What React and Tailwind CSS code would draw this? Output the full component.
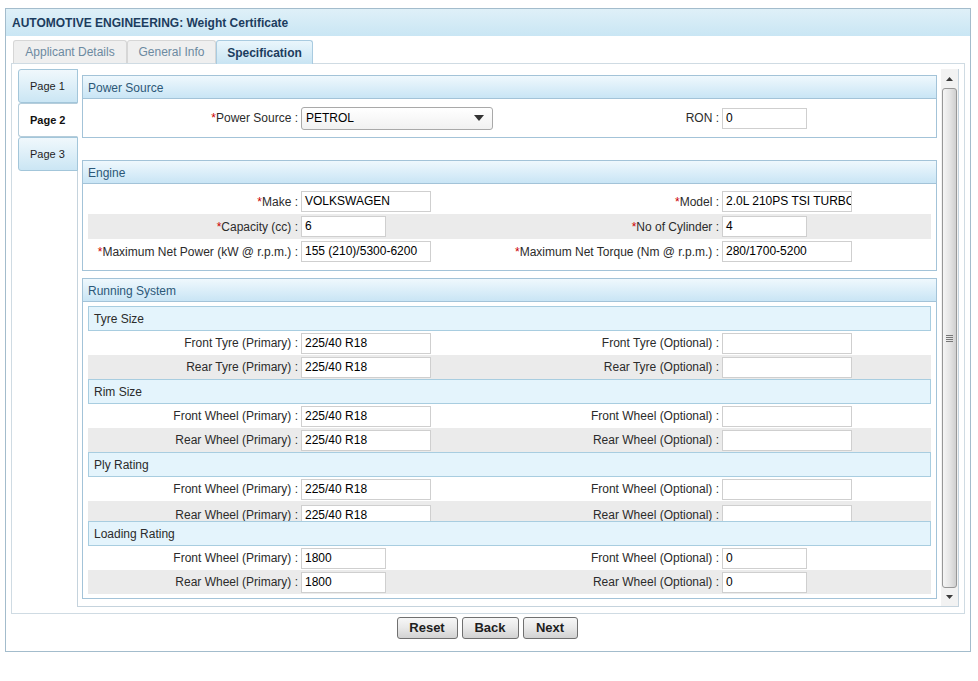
import React from "react";

const Req = () => <span className="text-[#cc0000]">*</span>;

function Field({ value = "", w = 130 }) {
  return (
    <div
      className={`${w === 130 ? "w-[130px]" : "w-[85px]"} ml-[2px] h-[21px] shrink-0 overflow-hidden whitespace-nowrap border border-[#cfcfcf] bg-white px-[3px] text-[12px] leading-[19px] text-black`}
    >
      {value}
    </div>
  );
}

function Half({ label, req, value, w }) {
  return (
    <div className="flex w-[421px] shrink-0 items-center">
      <div className="w-[211px] shrink-0 whitespace-nowrap pr-[1px] text-right">
        {req && <Req />}
        {label} :
      </div>
      <Field value={value} w={w} />
    </div>
  );
}

function Row({ gray, a, b, h = "h-[24px]" }) {
  return (
    <div className={`flex items-center ${h} ${gray ? "bg-[#ebebeb]" : "bg-white"}`}>
      <Half {...a} />
      <Half {...b} />
    </div>
  );
}

function ClippedRow({ gray, a, b }) {
  return (
    <div className={`h-[20px] overflow-hidden ${gray ? "bg-[#ebebeb]" : "bg-white"}`}>
      <div className="pt-[2px]">
        <Row gray={gray} a={a} b={b} />
      </div>
    </div>
  );
}

function SectionHeader({ children }) {
  return (
    <div className="flex h-[23px] items-center border-b border-[#a3c3d8] bg-gradient-to-b from-[#eff8fd] to-[#c9e5f5] px-[5px] pt-[1px] text-[12px] text-[#2c5878]">
      {children}
    </div>
  );
}

function SubHeader({ children }) {
  return (
    <div className="flex h-[25px] items-center border border-[#a8cde0] bg-[#e4f4fc] px-[5px] text-[12px] text-[#2b2b2b]">
      {children}
    </div>
  );
}

function Tri({ down }) {
  return (
    <svg width="7" height="4" viewBox="0 0 7 4">
      <path d={down ? "M0 0 L7 0 L3.5 4 Z" : "M0 4 L3.5 0 L7 4 Z"} fill="#3a3a3a" />
    </svg>
  );
}

function PageTab({ label, active }) {
  return (
    <div
      className={`flex h-[34px] items-center rounded-l-[3px] border pl-[11px] text-[11px] ${
        active
          ? "border-[#b5cddb] border-r-white bg-white font-bold text-[#111]"
          : "border-[#a3c6da] bg-gradient-to-b from-[#f0f8fc] to-[#cbe6f4] text-[#1e1e1e]"
      }`}
    >
      {label}
    </div>
  );
}

const t225 = "225/40 R18";

export default function App() {
  return (
    <div className="min-h-[681px] bg-white pl-[5px] pt-[8px] font-['Liberation_Sans',Arial,sans-serif] text-[12px] text-[#2b2b2b]">
      <div className="flex h-[644px] w-[966px] flex-col border border-[#a3bccc]">
        <div className="flex h-[27px] shrink-0 items-center bg-gradient-to-b from-[#dff0f8] to-[#c9e6f4] px-[6px] font-bold text-[#1c3c5e]">
          AUTOMOTIVE ENGINEERING: Weight Certificate
        </div>
        <div className="px-[5px] pt-[4px]">
          <div className="flex h-[23px] pl-[2px]">
            <div className="flex w-[114px] items-center justify-center rounded-t-[3px] border border-b-0 border-[#d6d6d6] bg-[#efefef] text-[#6c8aa1]">
              Applicant Details
            </div>
            <div className="flex w-[89px] items-center justify-center rounded-t-[3px] border border-b-0 border-[#d6d6d6] bg-[#efefef] text-[#6c8aa1]">
              General Info
            </div>
            <div className="relative z-10 flex h-[24px] w-[97px] items-center justify-center rounded-t-[3px] border border-b-0 border-[#a9cbe0] bg-gradient-to-b from-[#eaf6fc] to-[#c8e4f3] font-bold text-[#1c3c5e]">
              Specification
            </div>
          </div>
          <div className="flex h-[551px] border border-[#cfdbe3] pb-[6px] pl-[6px] pr-[4px] pt-[5px]">
            <div className="relative z-10 flex w-[60px] shrink-0 flex-col">
              <PageTab label="Page 1" />
              <PageTab label="Page 2" active />
              <PageTab label="Page 3" />
            </div>
            <div className="-ml-[1px] flex w-[882px] shrink-0 border-b border-l border-r border-[#c5d3dd]">
              <div className="flex w-[859px] shrink-0 flex-col overflow-hidden pl-[4px] pt-[6px]">
                {/* Power Source */}
                <div className="w-[855px] shrink-0 border border-[#a3c3d8]">
                  <SectionHeader>Power Source</SectionHeader>
                  <div className="px-[5px] py-[7px]">
                    <div className="flex h-[24px] items-center">
                      <div className="flex w-[421px] shrink-0 items-center">
                        <div className="w-[211px] shrink-0 whitespace-nowrap pr-[1px] text-right">
                          <Req />
                          Power Source :
                        </div>
                        <div className="ml-[2px] flex h-[23px] w-[192px] items-center justify-between rounded-[3px] border border-[#a9a9a9] bg-gradient-to-b from-white to-[#f1f1f1] pl-[4px] pr-[8px] text-black">
                          <span>PETROL</span>
                          <svg width="10" height="6" viewBox="0 0 10 6">
                            <path d="M0 0 L10 0 L5 6 Z" fill="#333" />
                          </svg>
                        </div>
                      </div>
                      <Half label="RON" value="0" w={85} />
                    </div>
                  </div>
                </div>

                {/* Engine */}
                <div className="mt-[22px] w-[855px] shrink-0 border border-[#a3c3d8]">
                  <SectionHeader>Engine</SectionHeader>
                  <div className="px-[5px] pb-[6px] pt-[5px]">
                    <Row
                      h="h-[25px]"
                      a={{ label: "Make", req: true, value: "VOLKSWAGEN", w: 130 }}
                      b={{ label: "Model", req: true, value: "2.0L 210PS TSI TURBO", w: 130 }}
                    />
                    <Row
                      h="h-[25px]"
                      gray
                      a={{ label: "Capacity (cc)", req: true, value: "6", w: 85 }}
                      b={{ label: "No of Cylinder", req: true, value: "4", w: 85 }}
                    />
                    <Row
                      h="h-[25px]"
                      a={{ label: "Maximum Net Power (kW @ r.p.m.)", req: true, value: "155 (210)/5300-6200", w: 130 }}
                      b={{ label: "Maximum Net Torque (Nm @ r.p.m.)", req: true, value: "280/1700-5200", w: 130 }}
                    />
                  </div>
                </div>

                {/* Running System */}
                <div className="mt-[7px] w-[855px] shrink-0 border border-[#a3c3d8]">
                  <SectionHeader>Running System</SectionHeader>
                  <div className="px-[5px] pb-[4px] pt-[4px]">
                    <SubHeader>Tyre Size</SubHeader>
                    <Row
                      a={{ label: "Front Tyre (Primary)", value: t225, w: 130 }}
                      b={{ label: "Front Tyre (Optional)", value: "", w: 130 }}
                    />
                    <Row
                      gray
                      a={{ label: "Rear Tyre (Primary)", value: t225, w: 130 }}
                      b={{ label: "Rear Tyre (Optional)", value: "", w: 130 }}
                    />
                    <SubHeader>Rim Size</SubHeader>
                    <Row
                      a={{ label: "Front Wheel (Primary)", value: t225, w: 130 }}
                      b={{ label: "Front Wheel (Optional)", value: "", w: 130 }}
                    />
                    <Row
                      gray
                      a={{ label: "Rear Wheel (Primary)", value: t225, w: 130 }}
                      b={{ label: "Rear Wheel (Optional)", value: "", w: 130 }}
                    />
                    <SubHeader>Ply Rating</SubHeader>
                    <Row
                      a={{ label: "Front Wheel (Primary)", value: t225, w: 130 }}
                      b={{ label: "Front Wheel (Optional)", value: "", w: 130 }}
                    />
                    <ClippedRow
                      gray
                      a={{ label: "Rear Wheel (Primary)", value: t225, w: 130 }}
                      b={{ label: "Rear Wheel (Optional)", value: "", w: 130 }}
                    />
                    <SubHeader>Loading Rating</SubHeader>
                    <Row
                      a={{ label: "Front Wheel (Primary)", value: "1800", w: 85 }}
                      b={{ label: "Front Wheel (Optional)", value: "0", w: 85 }}
                    />
                    <Row
                      gray
                      a={{ label: "Rear Wheel (Primary)", value: "1800", w: 85 }}
                      b={{ label: "Rear Wheel (Optional)", value: "0", w: 85 }}
                    />
                  </div>
                </div>
              </div>

              {/* Scrollbar */}
              <div className="ml-[4px] flex w-[17px] shrink-0 flex-col bg-[#f2f2f2]">
                <div className="flex h-[19px] shrink-0 items-center justify-center">
                  <Tri />
                </div>
                <div className="mx-[1px] flex flex-1 items-center justify-center rounded-[3px] border border-[#979797] bg-gradient-to-r from-[#f5f5f5] via-[#e6e6e6] to-[#cfcfcf]">
                  <div className="flex flex-col gap-[1px]">
                    <div className="h-[1px] w-[7px] bg-[#777]" />
                    <div className="h-[1px] w-[7px] bg-[#777]" />
                    <div className="h-[1px] w-[7px] bg-[#777]" />
                    <div className="h-[1px] w-[7px] bg-[#777]" />
                  </div>
                </div>
                <div className="flex h-[18px] shrink-0 items-center justify-center">
                  <Tri down />
                </div>
              </div>
            </div>
          </div>
        </div>
        <div className="mt-[3px] flex justify-center gap-[4px] pr-[2px]">
          <button className="h-[22px] w-[61px] rounded-[3px] border border-[#707070] bg-gradient-to-b from-[#f7f7f7] via-[#e8e8e8] to-[#d2d2d2] text-[13px] font-bold text-[#1e1e1e]">
            Reset
          </button>
          <button className="h-[22px] w-[57px] rounded-[3px] border border-[#707070] bg-gradient-to-b from-[#f7f7f7] via-[#e8e8e8] to-[#d2d2d2] text-[13px] font-bold text-[#1e1e1e]">
            Back
          </button>
          <button className="h-[22px] w-[55px] rounded-[3px] border border-[#707070] bg-gradient-to-b from-[#f7f7f7] via-[#e8e8e8] to-[#d2d2d2] text-[13px] font-bold text-[#1e1e1e]">
            Next
          </button>
        </div>
      </div>
    </div>
  );
}
